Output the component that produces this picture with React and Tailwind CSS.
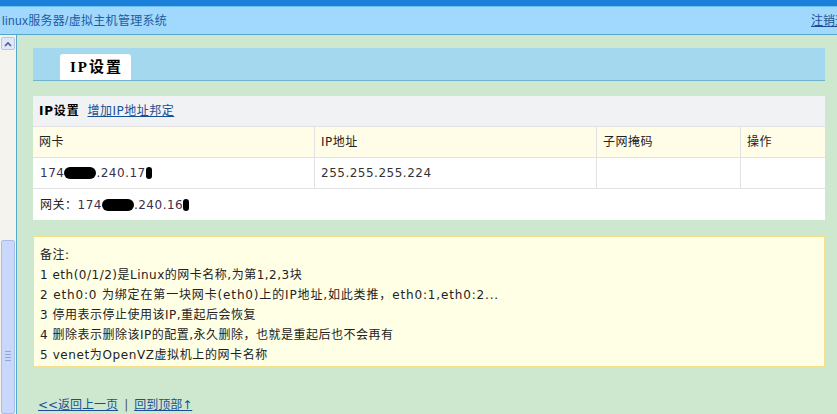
const LINK = 'text-[#1a4f96] underline';

function Blob({ w }) {
  return <span className="inline-block h-[12px] bg-black rounded-full align-[-2px]" style={{ width: w }} />;
}

export default function App() {
  return (
    <div className="w-[837px] h-[414px] overflow-hidden flex flex-col bg-[#cde8cf] text-[12px] text-[#222] font-['DejaVu_Sans','Noto_Sans_CJK_SC',sans-serif]">
      {/* top strip */}
      <div className="h-[6px] bg-[#1b80da]" />
      <div className="h-[1px] bg-[#6cc0f2]" />
      <div className="h-[28px] flex items-center bg-[#a0d8fe] border-b border-[#5aa6c6]">
        <div className="flex-1 pl-[2px] text-[#1d5c9e] text-[12px] tracking-[0.3px] font-['Liberation_Sans','Noto_Sans_CJK_SC',sans-serif]">
          linux服务器/虚拟主机管理系统
        </div>
        <a className={`w-[26px] shrink-0 whitespace-nowrap text-[12px] ${LINK}`}>注销退出</a>
      </div>

      <div className="flex-1 flex min-h-0">
        {/* scrollbar */}
        <div className="w-[17px] shrink-0 flex flex-col bg-[#f4f3ee] border-r border-[#5aa6c6] px-[1px] pt-[2px]">
          <div className="h-[13px] rounded-[2px] border border-[#b6c6e6] bg-[#dfe8fb] flex items-center justify-center">
            <svg width="8" height="6" viewBox="0 0 8 6">
              <path d="M1 5 L4 2 L7 5" fill="none" stroke="#4d6185" strokeWidth="1.6" />
            </svg>
          </div>
          <div className="h-[190px]" />
          <div className="flex-1 rounded-[2px] border border-[#a9bdec] bg-[#c8d7fa] flex flex-col items-center pt-[110px] gap-[2px]">
            <div className="w-[6px] h-[1px] bg-[#8ea6dc]" />
            <div className="w-[6px] h-[1px] bg-[#8ea6dc]" />
            <div className="w-[6px] h-[1px] bg-[#8ea6dc]" />
            <div className="w-[6px] h-[1px] bg-[#8ea6dc]" />
          </div>
        </div>

        {/* content */}
        <div className="flex-1 pl-[16px] pr-[12px] pt-[13px] flex flex-col">
          {/* tab bar */}
          <div className="h-[33px] bg-[#a3d8ee] border-b border-[#6fb3cd] flex items-end pl-[27px]">
            <div className="w-[71px] h-[26px] bg-white rounded-t-[3px] flex items-center justify-center pl-[2px] text-[15px] font-bold tracking-[2px] text-black font-['Liberation_Serif','Noto_Sans_CJK_SC',serif]">
              IP设置
            </div>
          </div>

          {/* table */}
          <div className="mt-[15px] bg-white tracking-[0.5px]">
            <div className="h-[31px] bg-[#f1f2f4] flex items-center gap-[8px] pl-[6px] border-b border-[#e2e2e2]">
              <span className="font-bold text-black tracking-[0.8px]">IP设置</span>
              <a className={LINK}>增加IP地址邦定</a>
            </div>
            <div className="grid grid-cols-[282px_282px_144px_1fr]">
              <div className="h-[31px] bg-[#fffde8] flex items-center pl-[6px] border-b border-r border-[#e2e2e2]">网卡</div>
              <div className="h-[31px] bg-[#fffde8] flex items-center pl-[6px] border-b border-r border-[#e2e2e2]">IP地址</div>
              <div className="h-[31px] bg-[#fffde8] flex items-center pl-[6px] border-b border-r border-[#e2e2e2]">子网掩码</div>
              <div className="h-[31px] bg-[#fffde8] flex items-center pl-[6px] border-b border-[#e2e2e2]">操作</div>

              <div className="h-[31px] flex items-center pl-[7px] border-b border-r border-[#e2e2e2] text-[#3b2f4e] whitespace-pre">
                174<Blob w={32} />.240.17<Blob w={6} />
              </div>
              <div className="h-[31px] flex items-center pl-[6px] border-b border-r border-[#e2e2e2] text-[#333]">255.255.255.224</div>
              <div className="h-[31px] border-b border-r border-[#e2e2e2]" />
              <div className="h-[31px] border-b border-[#e2e2e2]" />
            </div>
            <div className="h-[31px] flex items-center pl-[7px] whitespace-pre">
              网关：<span className="text-[#3b2f4e]">174</span><Blob w={32} /><span className="text-[#3b2f4e]">.240.16</span><Blob w={6} />
            </div>
          </div>

          {/* notes */}
          <div className="mt-[16px] h-[131px] bg-[#ffffe6] border border-[#f3e08c] pl-[6px] pt-[8px] leading-[20px] text-[#222] tracking-[0.5px]">
            <div>备注:</div>
            <div>1 eth(0/1/2)是Linux的网卡名称,为第1,2,3块</div>
            <div className="tracking-[0.85px]">2 eth0:0 为绑定在第一块网卡(eth0)上的IP地址,如此类推，eth0:1,eth0:2...</div>
            <div>3 停用表示停止使用该IP,重起后会恢复</div>
            <div>4 删除表示删除该IP的配置,永久删除，也就是重起后也不会再有</div>
            <div className="tracking-[0.6px]">5 venet为OpenVZ虚拟机上的网卡名称</div>
          </div>

          {/* footer links */}
          <div className="mt-[29px] pl-[5px] flex items-center gap-[6px]">
            <a className={LINK}>&lt;&lt;返回上一页</a>
            <span className="text-[#555]">|</span>
            <a className={LINK}>回到顶部↑</a>
          </div>
        </div>
      </div>
    </div>
  );
}
